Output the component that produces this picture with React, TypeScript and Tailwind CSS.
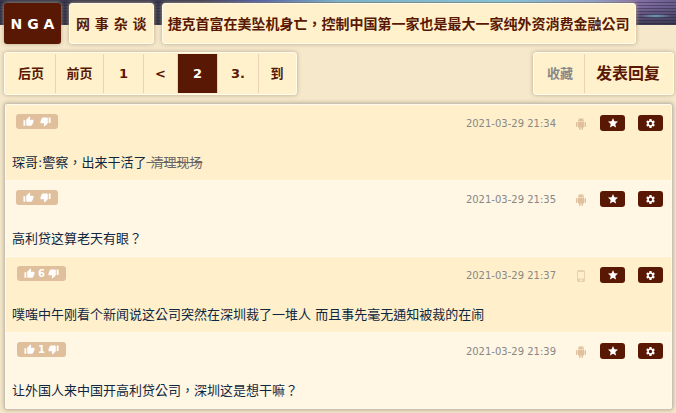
import type { ReactNode } from "react";
import clsx from "clsx";
import { MdSettings, MdStar, MdThumbDown, MdThumbUp } from "react-icons/md";

type Post = {
  id: number;
  time: string;
  device: "android" | "phone";
  votes?: number;
  body: ReactNode;
};

const posts: Post[] = [
  {
    id: 1,
    time: "2021-03-29 21:34",
    device: "android",
    body: (
      <>
        琛哥:警察，出来干活了
        <del className="text-[#666666]"> 清理现场</del>
      </>
    ),
  },
  { id: 2, time: "2021-03-29 21:35", device: "android", body: "高利贷这算老天有眼？" },
  {
    id: 3,
    time: "2021-03-29 21:37",
    device: "phone",
    votes: 6,
    body: "噗嗤中午刚看个新闻说这公司突然在深圳裁了一堆人 而且事先毫无通知被裁的在闹",
  },
  {
    id: 4,
    time: "2021-03-29 21:39",
    device: "android",
    votes: 1,
    body: "让外国人来中国开高利贷公司，深圳这是想干嘛？",
  },
];

const pages = [
  { label: "后页", width: "w-[38px]" },
  { label: "前页", width: "w-12" },
  { label: "1", width: "w-10" },
  { label: "<", width: "w-[34px]" },
  { label: "2", width: "w-10", current: true },
  { label: "3.", width: "w-[41px]" },
  { label: "到", width: "w-9" },
];

const panel =
  "rounded-[3px] border border-[#fffcee] bg-[#fff1cb] shadow-[0_0_4px_#b8a888]";

const devicePaths: Record<Post["device"], string> = {
  android:
    "M6 18c0 .55.45 1 1 1h1v3.5c0 .83.67 1.5 1.5 1.5s1.5-.67 1.5-1.5V19h2v3.5c0 .83.67 1.5 1.5 1.5s1.5-.67 1.5-1.5V19h1c.55 0 1-.45 1-1V8H6v10zM3.5 8C2.67 8 2 8.67 2 9.5v7c0 .83.67 1.5 1.5 1.5S5 17.33 5 16.5v-7C5 8.67 4.33 8 3.5 8zm17 0c-.83 0-1.5.67-1.5 1.5v7c0 .83.67 1.5 1.5 1.5s1.5-.67 1.5-1.5v-7c0-.83-.67-1.5-1.5-1.5zm-4.97-5.84l1.3-1.3c.2-.2.2-.51 0-.71-.2-.2-.51-.2-.71 0l-1.48 1.48C13.85 1.23 12.95 1 12 1c-.96 0-1.86.23-2.66.63L7.85.15c-.2-.2-.51-.2-.71 0-.2.2-.2.51 0 .71l1.31 1.31C6.97 3.26 6 5.01 6 7h12c0-1.99-.97-3.75-2.47-4.84zM10 5H9V4h1v1zm5 0h-1V4h1v1z",
  phone:
    "M7 0h10a3 3 0 0 1 3 3v18a3 3 0 0 1-3 3H7a3 3 0 0 1-3-3V3a3 3 0 0 1 3-3zm-1 4v13h12V4H6zm4 15v3h4v-3h-4z",
};

function DeviceIcon({ device }: { device: Post["device"] }) {
  return (
    <svg
      viewBox="0 0 24 24"
      className={clsx(
        "mt-px mr-[13px] ml-[19px] size-3 fill-current",
        device === "android" ? "text-[#e0bf9c]" : "text-[#ead0b3]",
      )}
      aria-hidden="true"
    >
      <path fillRule="evenodd" d={devicePaths[device]} />
    </svg>
  );
}

// Barra de cabecera: marca, foro y título del hilo
function Breadcrumb() {
  return (
    <nav className="flex gap-2 bg-[repeating-linear-gradient(180deg,transparent_0_2px,#1b1a2a66_2px_3px),radial-gradient(16px_2px_at_97%_16px,#6fa6c4,transparent),linear-gradient(180deg,transparent_5px,#2f2e42cc_25px),linear-gradient(90deg,#34344a,#3a3a50_30%,#4657a6_38%,#6fb4d4_50%,#7cc8e4_75%,#8a9bd0_88%,#8470a8_94%,#6a5c8c)] bg-[length:100%_25px] bg-no-repeat px-1 pt-[3px] text-sm font-bold whitespace-nowrap">
      <a
        href="#"
        className="flex h-[41px] w-[57px] items-center justify-center rounded-[3px] bg-[#591804] text-white shadow-[0_0_4px_#b8a888]"
      >
        N G A
      </a>
      <a href="#" className={clsx("flex h-[41px] items-center px-[6px]", panel)}>
        网 事 杂 谈
      </a>
      <a href="#" className={clsx("flex h-[41px] items-center px-[5px]", panel)}>
        捷克首富在美坠机身亡，控制中国第一家也是最大一家纯外资消费金融公司
      </a>
    </nav>
  );
}

function Toolbar() {
  return (
    <div className="flex items-center justify-between pt-2 pr-[2px] pl-1 text-[13px] font-bold">
      <div className={clsx("flex h-[43px] py-px pr-px pl-[13px]", panel)}>
        {pages.map((p, i) => (
          <a
            key={p.label}
            href="#"
            className={clsx(
              "flex items-center justify-center",
              p.width,
              i === 0 && "pr-[11px]",
              i < pages.length - 1 && "border-r border-[#ead3b4]",
              p.current && "bg-[#591804] text-white",
            )}
          >
            {p.label}
          </a>
        ))}
      </div>
      <div className={clsx("flex h-[43px] px-[13px] py-px", panel)}>
        <button className="border-r border-[#ead3b4] pr-[11px] text-[#888888]">收藏</button>
        <button className="pl-[11px] text-base">发表回复</button>
      </div>
    </div>
  );
}

function PostRow({ post }: { post: Post }) {
  return (
    <article className="min-h-[76px] border-b border-[#fffaeb] pr-2 pl-[6px] odd:bg-[#fff0cb] even:bg-[#fff6e4] last:border-b-0">
      <header className="flex items-start justify-between pl-1">
        <div
          className={clsx(
            "mt-[9px] flex h-[15px] items-center rounded-[3px] bg-[#e0bf9c] px-[7px] text-[10px] font-bold text-white",
            post.votes ? "ml-px gap-[3px]" : "gap-[6px]",
          )}
        >
          <button aria-label="赞">
            <MdThumbUp size={11} />
          </button>
          {post.votes}
          <button aria-label="踩">
            <MdThumbDown size={11} />
          </button>
        </div>
        <div className="mt-[10px] flex h-4 items-center text-[10px] text-[#888888]">
          <time className="pt-px">{post.time}</time>
          <DeviceIcon device={post.device} />
          <button
            aria-label="收藏"
            className="mr-[13px] flex h-4 w-[25px] items-center justify-center rounded-[3px] bg-[#591804] text-white"
          >
            <MdStar size={12} />
          </button>
          <button
            aria-label="设置"
            className="flex h-4 w-[25px] items-center justify-center rounded-[3px] bg-[#591804] text-white"
          >
            <MdSettings size={11} />
          </button>
        </div>
      </header>
      <p className="pt-[22px] text-[13px] leading-5 text-[#10273f]">{post.body}</p>
    </article>
  );
}

export default function App() {
  return (
    <div
      lang="zh-Hant"
      className="min-h-screen bg-[#f5e8cb] font-['DejaVu_Sans','Noto_Sans_CJK_TC',sans-serif] text-[#591804]"
    >
      <Breadcrumb />
      <Toolbar />
      <main className="mt-2 mr-[3px] ml-1 rounded-[3px] border border-[#c8c2b6] bg-[#fffaeb] px-px pt-px shadow-[0_0_4px_#b8a888]">
        {posts.map((p) => (
          <PostRow key={p.id} post={p} />
        ))}
      </main>
    </div>
  );
}
